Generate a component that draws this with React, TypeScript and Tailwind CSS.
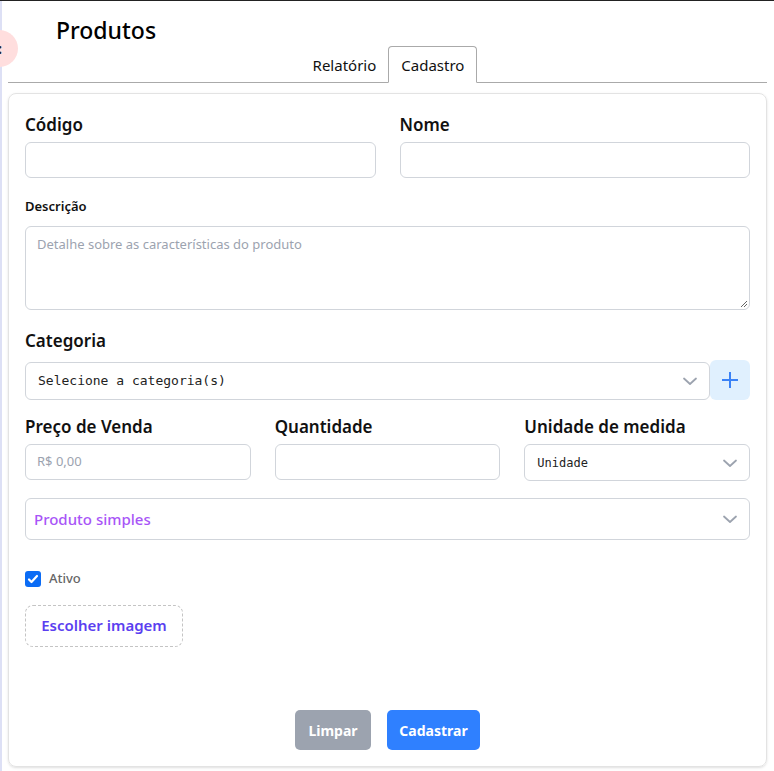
import React from "react";

const Chevron = ({ className = "" }: { className?: string }) => (
  <svg width="16" height="16" viewBox="0 0 16 16" className={className} fill="none">
    <path d="M2 5.5l6 5.5 6-5.5" stroke="currentColor" strokeWidth="1.8" strokeLinecap="round" strokeLinejoin="round" />
  </svg>
);

export default function App() {
  const font = { fontFamily: '"Noto Sans", "Open Sans", sans-serif' };
  return (
    <div className="relative w-[774px] h-[771px] bg-white overflow-hidden border-t border-[#222]" style={font}>
      <div className="absolute left-0 top-0 bottom-0 w-[2px] bg-[#dde0f5]" />
      <div className="absolute -left-[19px] top-[29px] w-[37px] h-[37px] rounded-full bg-[#ffdede] flex items-center justify-end pr-[16px] text-[#222] text-[14px] font-bold">:</div>
      <div className="pl-[8px] pr-[7px]">
        <div className="h-[45px] flex items-center pl-[48px] pt-[13px]">
          <h1 className="text-[23px] font-medium text-black leading-none">Produtos</h1>
        </div>
        <div className="flex justify-center border-b border-[#aaa] h-[37px] items-end pl-[3px]">
          <div className="h-[36px] px-[12px] pt-[2px] flex items-center text-[15px] text-[#111]">Relatório</div>
          <div className="h-[37px] px-[12px] pt-[2px] flex items-center text-[15px] text-[#111] border border-[#aaa] border-b-white rounded-t-[4px] bg-white -mb-px">Cadastro</div>
        </div>
        <div className="mt-[10px] border border-[#e3e3e3] rounded-[8px] shadow-sm h-[674px] px-[16px] pt-[19px] flex flex-col">
          <div className="grid grid-cols-2 gap-[24px]">
            <div>
              <div className="text-[17px] font-semibold text-[#111] leading-[24px]">Código</div>
              <div className="mt-[5px] h-[36px] border border-[#d1d5db] rounded-[6px]" />
            </div>
            <div>
              <div className="text-[17px] font-semibold text-[#111] leading-[24px]">Nome</div>
              <div className="mt-[5px] h-[36px] border border-[#d1d5db] rounded-[6px]" />
            </div>
          </div>
          <div className="mt-[18px] text-[13px] font-semibold text-[#111] leading-[20px]">Descrição</div>
          <div className="relative mt-[10px] h-[84px] border border-[#d1d5db] rounded-[6px] px-[11px] pt-[8px] text-[13px] text-[#9ca3af]">
            Detalhe sobre as características do produto
            <svg className="absolute right-[1px] bottom-[1px]" width="8" height="8" viewBox="0 0 8 8">
              <path d="M7 1L1 7M7 4L4 7" stroke="#666" strokeWidth="1" />
            </svg>
          </div>
          <div className="mt-[19px] text-[17px] font-semibold text-[#111] leading-[24px]">Categoria</div>
          <div className="mt-[9px] flex items-center">
            <div className="flex-1 h-[38px] border border-[#d1d5db] rounded-[6px] flex items-center justify-between pl-[12px] pr-[11px] text-[13px] text-[#222]" style={{ fontFamily: '"DejaVu Sans Mono", monospace' }}>
              <span>Selecione a categoria(s)</span>
              <Chevron className="text-[#9ca3af]" />
            </div>
            <div className="w-[40px] h-[40px] -mt-[3px] rounded-[6px] bg-[#e0f0fe] flex items-center justify-center">
              <svg width="18" height="18" viewBox="0 0 18 18">
                <path d="M9 1v16M1 9h16" stroke="#3b82f6" strokeWidth="2" />
              </svg>
            </div>
          </div>
          <div className="mt-[15px] grid grid-cols-3 gap-[24px]">
            <div>
              <div className="text-[17px] font-semibold text-[#111] leading-[24px]">Preço de Venda</div>
              <div className="mt-[5px] h-[36px] border border-[#d1d5db] rounded-[6px] flex items-center px-[11px] text-[13px] text-[#9ca3af]">R$ 0,00</div>
            </div>
            <div>
              <div className="text-[17px] font-semibold text-[#111] leading-[24px]">Quantidade</div>
              <div className="mt-[5px] h-[36px] border border-[#d1d5db] rounded-[6px]" />
            </div>
            <div>
              <div className="text-[17px] font-semibold text-[#111] leading-[24px]">Unidade de medida</div>
              <div className="mt-[5px] h-[37px] border border-[#d1d5db] rounded-[6px] flex items-center justify-between pl-[12px] pr-[11px] text-[12px] text-[#222]" style={{ fontFamily: '"DejaVu Sans Mono", monospace' }}>
                <span>Unidade</span>
                <Chevron className="text-[#9ca3af]" />
              </div>
            </div>
          </div>
          <div className="mt-[17px] h-[42px] border border-[#d1d5db] rounded-[6px] flex items-center justify-between pl-[8px] pr-[11px]">
            <span className="text-[15px] font-medium text-[#a855f7]">Produto simples</span>
            <Chevron className="text-[#9ca3af]" />
          </div>
          <div className="mt-[29px] flex items-center gap-[8px]">
            <div className="w-[16px] h-[16px] rounded-[3px] bg-[#0b6cf5] flex items-center justify-center">
              <svg width="12" height="12" viewBox="0 0 12 12">
                <path d="M2 6.5l2.5 2.5L10 3" stroke="white" strokeWidth="2.2" fill="none" strokeLinecap="round" strokeLinejoin="round" />
              </svg>
            </div>
            <span className="text-[13px] font-medium text-[#666]">Ativo</span>
          </div>
          <div className="mt-[16px] w-[158px] h-[42px] border border-dashed border-[#c4c4c4] rounded-[8px] flex items-center justify-center text-[15px] font-semibold text-[#5b3ff0]">
            Escolher imagem
          </div>
          <div className="mt-auto mb-[16px] flex justify-center gap-[16px]">
            <button className="w-[76px] h-[40px] rounded-[5px] bg-[#9ca3af] text-white text-[14px] font-bold">Limpar</button>
            <button className="w-[93px] h-[40px] rounded-[5px] bg-[#2f80ff] text-white text-[14px] font-bold">Cadastrar</button>
          </div>
        </div>
      </div>
    </div>
  );
}
